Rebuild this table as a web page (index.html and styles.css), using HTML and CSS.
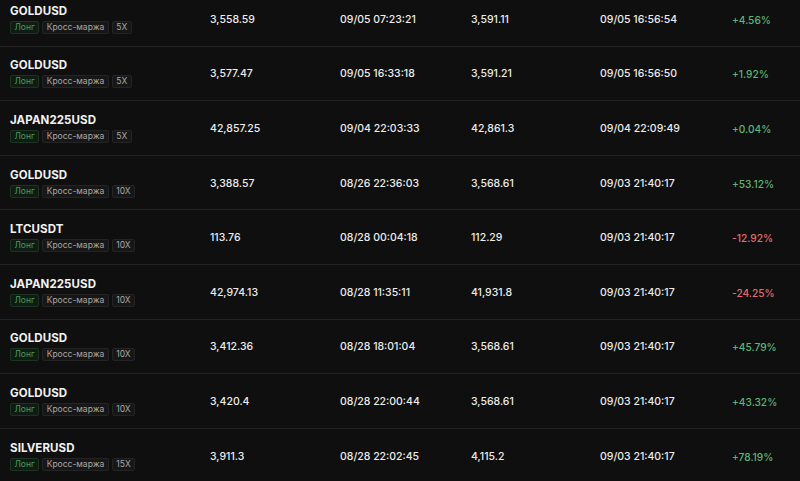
FILE: index.html
```html
<!DOCTYPE html>
<html>
<head>
<meta charset="utf-8">
<link rel="stylesheet" href="styles.css">
</head>
<body>
<div class="table">
  <div class="row">
    <div class="sym"><div class="name">GOLDUSD</div><div class="tags"><span class="tag long">Лонг</span><span class="tag">Кросс-маржа</span><span class="tag">5X</span></div></div>
    <div class="cell">3,558.59</div><div class="cell">09/05 07:23:21</div><div class="cell">3,591.11</div><div class="cell">09/05 16:56:54</div><div class="cell up">+4.56%</div>
  </div>
  <div class="row">
    <div class="sym"><div class="name">GOLDUSD</div><div class="tags"><span class="tag long">Лонг</span><span class="tag">Кросс-маржа</span><span class="tag">5X</span></div></div>
    <div class="cell">3,577.47</div><div class="cell">09/05 16:33:18</div><div class="cell">3,591.21</div><div class="cell">09/05 16:56:50</div><div class="cell up">+1.92%</div>
  </div>
  <div class="row">
    <div class="sym"><div class="name">JAPAN225USD</div><div class="tags"><span class="tag long">Лонг</span><span class="tag">Кросс-маржа</span><span class="tag">5X</span></div></div>
    <div class="cell">42,857.25</div><div class="cell">09/04 22:03:33</div><div class="cell">42,861.3</div><div class="cell">09/04 22:09:49</div><div class="cell up">+0.04%</div>
  </div>
  <div class="row">
    <div class="sym"><div class="name">GOLDUSD</div><div class="tags"><span class="tag long">Лонг</span><span class="tag">Кросс-маржа</span><span class="tag">10X</span></div></div>
    <div class="cell">3,388.57</div><div class="cell">08/26 22:36:03</div><div class="cell">3,568.61</div><div class="cell">09/03 21:40:17</div><div class="cell up">+53.12%</div>
  </div>
  <div class="row">
    <div class="sym"><div class="name">LTCUSDT</div><div class="tags"><span class="tag long">Лонг</span><span class="tag">Кросс-маржа</span><span class="tag">10X</span></div></div>
    <div class="cell">113.76</div><div class="cell">08/28 00:04:18</div><div class="cell">112.29</div><div class="cell">09/03 21:40:17</div><div class="cell down">-12.92%</div>
  </div>
  <div class="row">
    <div class="sym"><div class="name">JAPAN225USD</div><div class="tags"><span class="tag long">Лонг</span><span class="tag">Кросс-маржа</span><span class="tag">10X</span></div></div>
    <div class="cell">42,974.13</div><div class="cell">08/28 11:35:11</div><div class="cell">41,931.8</div><div class="cell">09/03 21:40:17</div><div class="cell down">-24.25%</div>
  </div>
  <div class="row">
    <div class="sym"><div class="name">GOLDUSD</div><div class="tags"><span class="tag long">Лонг</span><span class="tag">Кросс-маржа</span><span class="tag">10X</span></div></div>
    <div class="cell">3,412.36</div><div class="cell">08/28 18:01:04</div><div class="cell">3,568.61</div><div class="cell">09/03 21:40:17</div><div class="cell up">+45.79%</div>
  </div>
  <div class="row">
    <div class="sym"><div class="name">GOLDUSD</div><div class="tags"><span class="tag long">Лонг</span><span class="tag">Кросс-маржа</span><span class="tag">10X</span></div></div>
    <div class="cell">3,420.4</div><div class="cell">08/28 22:00:44</div><div class="cell">3,568.61</div><div class="cell">09/03 21:40:17</div><div class="cell up">+43.32%</div>
  </div>
  <div class="row">
    <div class="sym"><div class="name">SILVERUSD</div><div class="tags"><span class="tag long">Лонг</span><span class="tag">Кросс-маржа</span><span class="tag">15X</span></div></div>
    <div class="cell">3,911.3</div><div class="cell">08/28 22:02:45</div><div class="cell">4,115.2</div><div class="cell">09/03 21:40:17</div><div class="cell up">+78.19%</div>
  </div>
</div>
</body>
</html>
```
FILE: styles.css
```css
html, body {
  margin: 0;
  padding: 0;
  background: #0f0f0f;
  overflow: hidden;
}
body {
  font-family: Inter, "Noto Sans", sans-serif;
  color: #ececec;
}
.table {
  margin-top: -8px;
}
.row {
  display: grid;
  grid-template-columns: 200px 130px 131px 129px 132px 1fr;
  align-items: center;
  height: 53.6px;
  padding-left: 10px;
  border-bottom: 1px solid #232323;
}
.sym {
  display: flex;
  flex-direction: column;
  gap: 3px;
}
.name {
  font-weight: 700;
  font-size: 11.5px;
  line-height: 14px;
  color: #f2f2f2;
  letter-spacing: 0.1px;
}
.tags {
  display: flex;
  gap: 3px;
}
.tag {
  font-size: 8.5px;
  line-height: 11px;
  padding: 0 3.5px;
  border: 1px solid #242424;
  background: #171717;
  color: #a8a8a8;
  border-radius: 2px;
}
.tag.long {
  color: #4e9a60;
  background: #0f1c13;
  border-color: #1c3523;
}
.cell {
  font-size: 10.5px;
  line-height: 14px;
  padding-top: 2px;
  font-weight: 500;
  color: #ececec;
}
.cell.up {
  color: #5db575;
  font-size: 10.2px;
}
.cell.down {
  color: #e06e6e;
  font-size: 10.2px;
}
```
